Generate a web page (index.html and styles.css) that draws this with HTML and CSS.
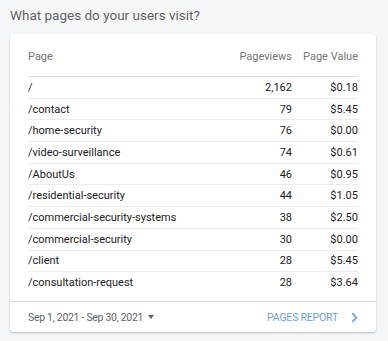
FILE: index.html
```html
<!DOCTYPE html>
<html>
<head>
<meta charset="utf-8">
<link rel="stylesheet" href="styles.css">
</head>
<body>
<div class="page">
  <h2 class="title">What pages do your users visit?</h2>
  <div class="card">
    <div class="table-wrap">
      <table class="table">
        <thead>
          <tr><th class="col-page">Page</th><th class="num">Pageviews</th><th class="num val">Page Value</th></tr>
        </thead>
        <tbody>
          <tr><td>/</td><td class="num">2,162</td><td class="num">$0.18</td></tr>
          <tr><td>/contact</td><td class="num">79</td><td class="num">$5.45</td></tr>
          <tr><td>/home-security</td><td class="num">76</td><td class="num">$0.00</td></tr>
          <tr><td>/video-surveillance</td><td class="num">74</td><td class="num">$0.61</td></tr>
          <tr><td>/AboutUs</td><td class="num">46</td><td class="num">$0.95</td></tr>
          <tr><td>/residential-security</td><td class="num">44</td><td class="num">$1.05</td></tr>
          <tr><td>/commercial-security-systems</td><td class="num">38</td><td class="num">$2.50</td></tr>
          <tr><td>/commercial-security</td><td class="num">30</td><td class="num">$0.00</td></tr>
          <tr><td>/client</td><td class="num">28</td><td class="num">$5.45</td></tr>
          <tr><td>/consultation-request</td><td class="num">28</td><td class="num">$3.64</td></tr>
        </tbody>
      </table>
    </div>
    <div class="footer">
      <div class="date">Sep 1, 2021 - Sep 30, 2021 <span class="caret"></span></div>
      <a class="report">PAGES REPORT
        <svg class="chev" width="7" height="11" viewBox="0 0 7 11"><path d="M1.3 1.2 L5.3 5.5 L1.3 9.8" fill="none" stroke="currentColor" stroke-width="1.8"/></svg>
      </a>
    </div>
  </div>
</div>
</body>
</html>
```
FILE: styles.css
```css
html, body { margin: 0; padding: 0; }
body {
  background: #f5f6f8;
  font-family: Roboto, "Liberation Sans", sans-serif;
  width: 388px;
  height: 341px;
  overflow: hidden;
}
.page { padding: 7px 12px 0 10px; }
.title {
  margin: 0 0 10px 0;
  font-size: 13.5px;
  font-weight: 400;
  color: #5f6368;
  line-height: 17px;
}
.card {
  background: #fff;
  border-radius: 3px;
  box-shadow: 0 1px 2px rgba(0,0,0,0.25);
  height: 298px;
  display: flex;
  flex-direction: column;
}
.table-wrap { padding: 16px 18px 0 18px; flex: 1; }
.table { width: 100%; border-collapse: collapse; font-size: 11px; }
.table th {
  font-weight: 400;
  color: #757575;
  text-align: left;
  line-height: 14px;
  vertical-align: top;
  padding: 0 0 12px 0;
  border-bottom: 1px solid #dadce0;
}
.table th.num { text-align: right; }
.table th.val { width: 66px; }
.table td {
  height: 20.7px;
  padding: 0;
  color: #212121;
  border-bottom: 1px solid #ebebeb;
}
.table tbody tr:last-child td { border-bottom: none; }
.table td.num { text-align: right; }
.footer {
  border-top: 1px solid #e0e0e0;
  height: 30px;
  display: flex;
  align-items: center;
  justify-content: space-between;
  padding: 0 18px;
}
.date {
  font-size: 10.5px;
  letter-spacing: -0.3px;
  color: #5f6368;
  display: flex;
  align-items: center;
}
.caret {
  display: inline-block;
  width: 0; height: 0;
  border-left: 3.5px solid transparent;
  border-right: 3.5px solid transparent;
  border-top: 4px solid #5f6368;
  margin-left: 5px;
}
.report {
  font-size: 10.5px;
  letter-spacing: -0.2px;
  color: #6d9eeb;
  display: flex;
  align-items: center;
  gap: 13px;
}
.chev { color: #6d9eeb; }
```
